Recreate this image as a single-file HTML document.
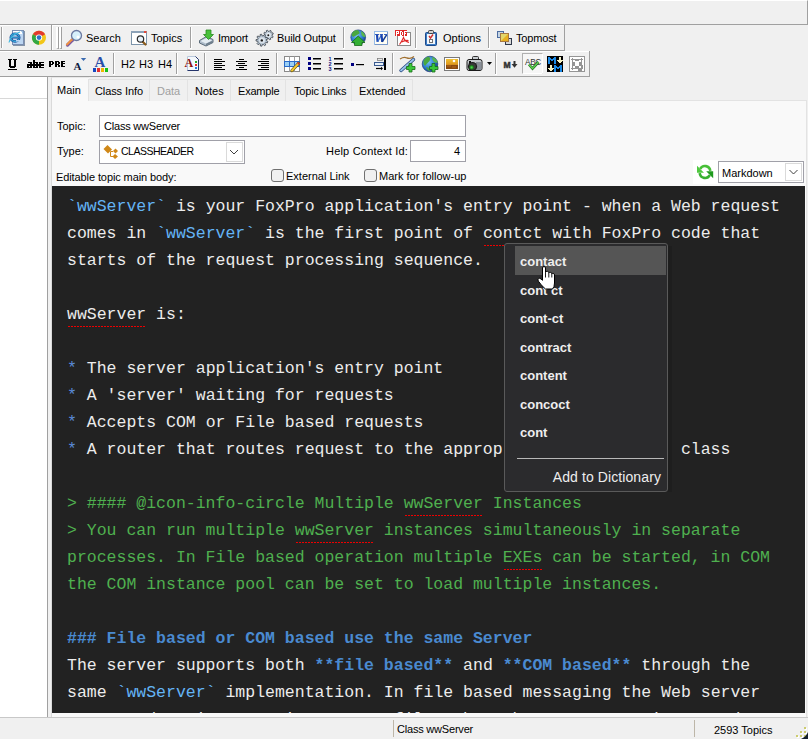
<!DOCTYPE html>
<html><head><meta charset="utf-8">
<style>
*{margin:0;padding:0;box-sizing:border-box}
html,body{width:808px;height:739px;overflow:hidden;background:#f0f0f0;font-family:"Liberation Sans",sans-serif;color:#000}
.a{position:absolute}
.t{position:absolute;white-space:nowrap;font-size:11px;line-height:12px}
.hl{position:absolute;height:1px}
.vl{position:absolute;width:1px}
.ic{position:absolute;width:16px;height:16px;overflow:visible}
#ed{position:absolute;left:52px;top:186px;width:753px;height:527px;background:#222;overflow:hidden}
#ed pre{position:absolute;left:15px;top:7px;font-family:"Liberation Mono",monospace;font-size:16.5px;line-height:27px;color:#ececec;white-space:pre}
.cd{color:#64b4f5}
.bl{color:#5a8ad6}
.gr{color:#4fb04f}
.hd{color:#4a8ad0;font-weight:bold}
.sp{background-image:linear-gradient(90deg,#e00 50%,transparent 50%);background-size:2px 1px;background-repeat:repeat-x;background-position:0 24px}
#menu{position:absolute;left:504px;top:243px;width:164px;height:249px;background:#2b2b2d;border:1px solid #5a5a5a;border-radius:3px}
.sq{height:1px;background-image:linear-gradient(90deg,#e00 66%,transparent 66%);background-size:3px 1px}
.mi{position:absolute;left:15px;font-weight:bold;font-size:13px;color:#eee;line-height:16px;white-space:nowrap}
</style></head><body>

<!-- top band -->
<div class="a" style="left:0;top:0;width:808px;height:25px;border-top:1px solid #fff;border-bottom:1px solid #a0a0a0;border-right:1px solid #a0a0a0;background:#f0f0f0"></div>

<!-- toolbar row 1 -->
<div class="hl" style="left:0;top:25px;width:564px;background:#fff"></div>
<div class="hl" style="left:0;top:50px;width:565px;background:#a0a0a0"></div>
<div class="vl" style="left:1px;top:27px;height:21px;background:#a0a0a0"></div>
<div class="vl" style="left:2px;top:27px;height:21px;background:#fff"></div>
<div class="vl" style="left:51px;top:25px;height:26px;background:#a0a0a0"></div>
<div class="vl" style="left:52px;top:25px;height:25px;background:#fff"></div>
<div class="vl" style="left:564px;top:25px;height:26px;background:#a0a0a0"></div>
<!-- gripper -->
<div class="a" style="left:56px;top:27px;width:3px;height:22px;border-left:2px solid #fff;border-right:1px solid #a0a0a0;border-bottom:1px solid #a0a0a0"></div>
<div class="a" style="left:59px;top:27px;width:3px;height:22px;border-left:2px solid #fff;border-right:1px solid #a0a0a0;border-bottom:1px solid #a0a0a0"></div>

<div class="t" style="left:86px;top:32px">Search</div>
<div class="t" style="left:151px;top:32px">Topics</div>
<div class="vl" style="left:190px;top:27px;height:21px;background:#a0a0a0"></div><div class="vl" style="left:191px;top:27px;height:22px;background:#fff"></div><div class="hl" style="left:190px;top:48px;width:1px;background:#fff"></div>
<div class="t" style="left:218px;top:32px;letter-spacing:-0.2px">Import</div>
<div class="t" style="left:277px;top:32px;letter-spacing:-0.15px">Build Output</div>
<div class="vl" style="left:343px;top:27px;height:21px;background:#a0a0a0"></div><div class="vl" style="left:344px;top:27px;height:22px;background:#fff"></div><div class="hl" style="left:343px;top:48px;width:1px;background:#fff"></div>
<div class="vl" style="left:415px;top:27px;height:21px;background:#a0a0a0"></div><div class="vl" style="left:416px;top:27px;height:22px;background:#fff"></div><div class="hl" style="left:415px;top:48px;width:1px;background:#fff"></div>
<div class="t" style="left:443px;top:32px">Options</div>
<div class="vl" style="left:488px;top:27px;height:21px;background:#a0a0a0"></div><div class="vl" style="left:489px;top:27px;height:22px;background:#fff"></div><div class="hl" style="left:488px;top:48px;width:1px;background:#fff"></div>
<div class="t" style="left:516px;top:32px;letter-spacing:-0.15px">Topmost</div>

<!-- toolbar row 2 -->
<div class="hl" style="left:0;top:51px;width:589px;background:#fff"></div>
<div class="hl" style="left:0;top:76px;width:590px;background:#a0a0a0"></div>
<div class="vl" style="left:589px;top:51px;height:26px;background:#a0a0a0"></div>
<div class="vl" style="left:113px;top:53px;height:21px;background:#a0a0a0"></div><div class="vl" style="left:114px;top:53px;height:22px;background:#fff"></div><div class="hl" style="left:113px;top:74px;width:1px;background:#fff"></div>
<div class="t" style="left:121px;top:58px">H2</div>
<div class="t" style="left:139px;top:58px">H3</div>
<div class="t" style="left:158px;top:58px">H4</div>
<div class="vl" style="left:176px;top:53px;height:21px;background:#a0a0a0"></div><div class="vl" style="left:177px;top:53px;height:22px;background:#fff"></div><div class="hl" style="left:176px;top:74px;width:1px;background:#fff"></div>
<div class="vl" style="left:204px;top:53px;height:21px;background:#a0a0a0"></div><div class="vl" style="left:205px;top:53px;height:22px;background:#fff"></div><div class="hl" style="left:204px;top:74px;width:1px;background:#fff"></div>
<div class="vl" style="left:276px;top:53px;height:21px;background:#a0a0a0"></div><div class="vl" style="left:277px;top:53px;height:22px;background:#fff"></div><div class="hl" style="left:276px;top:74px;width:1px;background:#fff"></div>
<div class="vl" style="left:392px;top:53px;height:21px;background:#a0a0a0"></div><div class="vl" style="left:393px;top:53px;height:22px;background:#fff"></div><div class="hl" style="left:392px;top:74px;width:1px;background:#fff"></div>
<div class="vl" style="left:495px;top:53px;height:21px;background:#a0a0a0"></div><div class="vl" style="left:496px;top:53px;height:22px;background:#fff"></div><div class="hl" style="left:495px;top:74px;width:1px;background:#fff"></div>

<!-- left panel -->
<div class="a" style="left:0;top:77px;width:47px;height:640px;background:#fff"></div>
<div class="vl" style="left:47px;top:77px;height:640px;background:#a0a0a0"></div>
<div class="hl" style="left:0;top:98px;width:47px;background:#d8d8d8"></div>

<!-- main panel -->
<div class="a" style="left:51px;top:100px;width:756px;height:617px;background:#f9f9f9;border-left:1px solid #dadada;border-top:1px solid #e3e3e3;border-right:1px solid #e3e3e3"></div>
<!-- tabs -->
<div class="a" style="left:51px;top:77px;width:38px;height:25px;background:#f9f9f9;border-left:1px solid #dadada;border-top:1px solid #e8e8e8"></div>
<div class="t" style="left:57px;top:84px;font-size:11px">Main</div>
<div class="a" style="left:88px;top:79px;width:62px;height:22px;border:1px solid #e3e3e3;border-bottom:none;background:#f0f0f0"></div>
<div class="t" style="left:95px;top:85px;letter-spacing:-0.1px">Class Info</div>
<div class="a" style="left:149px;top:79px;width:39px;height:22px;border:1px solid #e3e3e3;border-bottom:none;background:#f0f0f0"></div>
<div class="t" style="left:157px;top:85px;color:#a0a0a0">Data</div>
<div class="a" style="left:187px;top:79px;width:44px;height:22px;border:1px solid #e3e3e3;border-bottom:none;background:#f0f0f0"></div>
<div class="t" style="left:195px;top:85px">Notes</div>
<div class="a" style="left:230px;top:79px;width:56px;height:22px;border:1px solid #e3e3e3;border-bottom:none;background:#f0f0f0"></div>
<div class="t" style="left:238px;top:85px;letter-spacing:-0.2px">Example</div>
<div class="a" style="left:285px;top:79px;width:67px;height:22px;border:1px solid #e3e3e3;border-bottom:none;background:#f0f0f0"></div>
<div class="t" style="left:294px;top:85px;letter-spacing:-0.2px">Topic Links</div>
<div class="a" style="left:351px;top:79px;width:62px;height:22px;border:1px solid #e3e3e3;border-bottom:none;background:#f0f0f0"></div>
<div class="t" style="left:359px;top:85px">Extended</div>

<!-- form -->
<div class="t" style="left:57px;top:120px">Topic:</div>
<div class="a" style="left:99px;top:115px;width:367px;height:22px;border:1px solid #a0a0a8;background:#fff"></div>
<div class="t" style="left:104px;top:120px;letter-spacing:-0.2px">Class wwServer</div>
<div class="t" style="left:57px;top:145px">Type:</div>
<div class="a" style="left:99px;top:140px;width:146px;height:24px;border:1px solid #a0a0a8;background:#fff"></div>
<div class="a" style="left:226px;top:142px;width:17px;height:20px;border:1px solid #dadada;background:#fff"></div>
<div class="t" style="left:121px;top:145px;font-size:10.5px;letter-spacing:-0.5px">CLASSHEADER</div>
<div class="t" style="left:326px;top:145px;letter-spacing:0.2px">Help Context Id:</div>
<div class="a" style="left:410px;top:140px;width:56px;height:22px;border:1px solid #a0a0a8;background:#fff"></div>
<div class="t" style="left:454px;top:145px">4</div>
<div class="t" style="left:56px;top:171px;letter-spacing:-0.1px">Editable topic main body:</div>
<div class="a" style="left:271px;top:169px;width:13px;height:13px;border:1px solid #707070;border-radius:3px;background:#f0f0f0"></div>
<div class="t" style="left:286px;top:170px">External Link</div>
<div class="a" style="left:364px;top:169px;width:13px;height:13px;border:1px solid #707070;border-radius:3px;background:#f0f0f0"></div>
<div class="t" style="left:379px;top:170px">Mark for follow-up</div>
<div class="a" style="left:693px;top:160px;width:25px;height:24px;background:#fff"></div>
<div class="a" style="left:718px;top:161px;width:86px;height:22px;border:1px solid #a0a0a8;background:#fff"></div>
<div class="a" style="left:785px;top:163px;width:17px;height:18px;border:1px solid #dadada;background:#fff"></div>
<div class="t" style="left:722px;top:167px">Markdown</div>

<!-- icons -->
<svg class="a" style="left:0;top:0" width="808" height="739" viewBox="0 0 808 739">
<!-- IE doc -->
<rect x="13" y="31" width="12" height="15" fill="#8494a8"/>
<rect x="12.5" y="30.5" width="11" height="14" fill="#bcd6f2" stroke="#7a8eb2"/>
<rect x="13" y="31" width="9" height="3" fill="#fff"/>
<path d="M21 30.5 L23.5 33" stroke="#6aa0d0" fill="none"/>
<ellipse cx="15" cy="37.6" rx="4.2" ry="3.9" fill="none" stroke="#1a4a98" stroke-width="2.6"/>
<ellipse cx="15" cy="37.6" rx="4.2" ry="3.9" fill="none" stroke="#38a8d8" stroke-width="1.3"/>
<path d="M10.8 37.6 H19.4" stroke="#1a4a98" stroke-width="1.8"/>
<path d="M11.2 37.4 H19" stroke="#38a8d8" stroke-width="0.8"/>
<path d="M16 40.8 H20.5" stroke="#bcd6f2" stroke-width="1.6"/>
<path d="M9 42.5 Q10.5 35 20 32" stroke="#40b8e0" stroke-width="1.1" fill="none"/>
<!-- Chrome -->
<circle cx="39" cy="37.8" r="7" fill="#f2c618"/>
<path d="M39 37.8 L32.9 34.3 A7 7 0 0 1 45.1 34.3 Z" fill="#e23a2e"/>
<path d="M39 37.8 L32.9 34.3 A7 7 0 0 0 39 44.8 Z" fill="#32a844"/>
<circle cx="39" cy="37.6" r="3.2" fill="#fff"/>
<circle cx="39" cy="37.6" r="2.3" fill="#2f72c8"/>
<!-- magnifier -->
<path d="M67.5 45 L72.5 40" stroke="#7a5aa0" stroke-width="3.2" stroke-linecap="round"/>
<path d="M67 44.5 L72 39.5" stroke="#f09040" stroke-width="2" stroke-linecap="round"/>
<circle cx="76.5" cy="35.5" r="5" fill="#d6effb" stroke="#6a78a0" stroke-width="1.3"/>
<circle cx="78" cy="37" r="1.5" fill="#fff"/>
<!-- topics window -->
<rect x="131.5" y="31.5" width="15" height="13" fill="#fff" stroke="#7c94aa"/>
<rect x="131" y="31" width="16" height="2" fill="#8ca2b8"/>
<rect x="144" y="31" width="2.5" height="2" fill="#e04a3a"/>
<path d="M142.5 41.5 L145.5 44.5" stroke="#8a5a1a" stroke-width="2.2" stroke-linecap="round"/>
<circle cx="140.5" cy="39" r="3.2" fill="#e8f2fa" stroke="#2a2a2a" stroke-width="1.2"/>
<!-- import -->
<path d="M199.5 40.5 L206.5 36.5 L213 39.5 L213 42.5 L206 46 L199.5 43 Z" fill="#aebccb" stroke="#5a6a78"/>
<path d="M200.5 41 L206.5 38 L212 40.5 L206 43.5 Z" fill="#e4ecf2"/>
<path d="M206 43.8 L212.5 40.8 L212.5 42.5 L206 45.5 Z" fill="#6c7c8a"/>
<path d="M206 30 H211 V34.5 H213.5 L208.5 39.5 L203.5 34.5 H206 Z" fill="#48c03a" stroke="#2a8a20" stroke-width="0.8"/>
<!-- gears -->
<path d="M272.03 35.72 L273.15 36.53 L272.56 37.74 L271.23 37.35 L270.49 38.00 L270.71 39.37 L269.44 39.81 L268.77 38.59 L267.78 38.53 L266.97 39.65 L265.76 39.06 L266.15 37.73 L265.50 36.99 L264.13 37.21 L263.69 35.94 L264.91 35.27 L264.97 34.28 L263.85 33.47 L264.44 32.26 L265.77 32.65 L266.51 32.00 L266.29 30.63 L267.56 30.19 L268.23 31.41 L269.22 31.47 L270.03 30.35 L271.24 30.94 L270.85 32.27 L271.50 33.01 L272.87 32.79 L273.31 34.06 L272.09 34.73 Z" fill="#c4d0dc" stroke="#3c444c" stroke-width="0.8"/>
<circle cx="268.5" cy="35" r="2.2" fill="#e8eef4"/>
<circle cx="268.3" cy="35.2" r="1" fill="#1a1a1a"/>
<path d="M266.38 40.64 L267.87 41.42 L267.41 42.80 L265.74 42.51 L265.07 43.35 L265.72 44.91 L264.47 45.67 L263.38 44.38 L262.33 44.59 L261.82 46.20 L260.37 45.98 L260.37 44.29 L259.43 43.77 L258.01 44.68 L257.04 43.58 L258.12 42.28 L257.74 41.28 L256.06 41.06 L256.03 39.60 L257.69 39.31 L258.04 38.29 L256.90 37.04 L257.81 35.90 L259.27 36.75 L260.19 36.19 L260.12 34.50 L261.55 34.22 L262.13 35.80 L263.19 35.96 L264.22 34.63 L265.50 35.33 L264.93 36.92 L265.64 37.72 L267.28 37.36 L267.81 38.72 L266.35 39.57 Z" fill="#b4c2d0" stroke="#3c444c" stroke-width="0.8"/>
<circle cx="262" cy="40.2" r="3" fill="#dce4ec"/>
<circle cx="261.8" cy="40.4" r="1.2" fill="#1a1a1a"/>
<!-- globe up -->
<circle cx="358.2" cy="37.3" r="7.4" fill="url(#gl)" stroke="#1e3e80" stroke-width="0.7"/>
<path d="M351.5 35 Q352.5 30.5 357 30 Q360 31 359.5 33.5 Q356 35.5 353 37 Z" fill="#4aa840"/>
<path d="M361 31 Q365 33 365.5 37 Q363 37.5 361.5 35 Z" fill="#5ab848"/>
<path d="M358.2 36 L351.5 42.5 H354.5 V45.5 H362 V42.5 H365 Z" fill="#34b034" stroke="#1a6a1a" stroke-width="0.8"/>
<!-- W -->
<rect x="374.5" y="31.5" width="13" height="13" fill="#fffef4" stroke="#98bce8"/>
<path d="M375 44.5 H387.5 V32" stroke="#7898c8" fill="none"/>
<path d="M375 34.5 H379 M379.8 34.5 H383 M384 34.5 H387" stroke="#3a64c0" stroke-width="1"/>
<path d="M377 34.5 L377.6 41.8" stroke="#1a44b0" stroke-width="2.2"/>
<path d="M377.6 41.8 L381.6 34.8" stroke="#3a70d0" stroke-width="1.3"/>
<path d="M381.5 34.5 L382.2 41.8" stroke="#1a44b0" stroke-width="2.2"/>
<path d="M382.2 41.8 L386.6 34.8" stroke="#123a90" stroke-width="1.5"/>
<!-- PDF -->
<rect x="397.5" y="32.5" width="13" height="13" fill="#fff" stroke="#8a8a8a"/>
<rect x="395" y="30" width="12" height="6" fill="#e02828"/>
<g fill="#fff" shape-rendering="crispEdges"><rect x="396" y="31" width="1" height="1"/><rect x="397" y="31" width="1" height="1"/><rect x="398" y="31" width="1" height="1"/><rect x="396" y="32" width="1" height="1"/><rect x="398" y="32" width="1" height="1"/><rect x="396" y="33" width="1" height="1"/><rect x="397" y="33" width="1" height="1"/><rect x="398" y="33" width="1" height="1"/><rect x="396" y="34" width="1" height="1"/><rect x="396" y="35" width="1" height="1"/><rect x="400" y="31" width="1" height="1"/><rect x="401" y="31" width="1" height="1"/><rect x="400" y="32" width="1" height="1"/><rect x="402" y="32" width="1" height="1"/><rect x="400" y="33" width="1" height="1"/><rect x="402" y="33" width="1" height="1"/><rect x="400" y="34" width="1" height="1"/><rect x="402" y="34" width="1" height="1"/><rect x="400" y="35" width="1" height="1"/><rect x="401" y="35" width="1" height="1"/><rect x="404" y="31" width="1" height="1"/><rect x="405" y="31" width="1" height="1"/><rect x="406" y="31" width="1" height="1"/><rect x="404" y="32" width="1" height="1"/><rect x="404" y="33" width="1" height="1"/><rect x="405" y="33" width="1" height="1"/><rect x="404" y="34" width="1" height="1"/><rect x="404" y="35" width="1" height="1"/></g>
<path d="M399.5 44.5 Q402 41 403.5 37.5 Q404.5 41 409 42.5 M401.5 42 Q405 40 408.5 40.5" stroke="#e02828" stroke-width="1.1" fill="none"/>
<!-- clipboard -->
<rect x="425.5" y="32.5" width="11" height="13" rx="1" fill="#3c7cc4" stroke="#1c4a8c"/>
<rect x="427" y="34" width="8" height="10" fill="#f2f6fb"/>
<rect x="428.5" y="30.5" width="5" height="3" rx="1" fill="#d0d0d0" stroke="#404040"/>
<path d="M429 36 L430.5 38 L433 34.5" stroke="#d03030" stroke-width="1.4" fill="none"/>
<rect x="429.5" y="39.5" width="3" height="3" fill="#fff" stroke="#707070"/>
<!-- topmost -->
<rect x="497.5" y="31.5" width="6" height="6" fill="#c4d4e4" stroke="#4c6ca0"/>
<rect x="505.5" y="38.5" width="6" height="6" fill="#d8d8d8" stroke="#303848"/>
<rect x="500.5" y="33.5" width="8" height="8" fill="#e4d66a" stroke="#a87840"/>
<path d="M501 41 L508 34 V41 Z" fill="#e8b020"/>

<!-- ROW 2 -->
<g fill="#000" shape-rendering="crispEdges">
<rect x="8" y="59" width="4" height="1"/><rect x="13" y="59" width="4" height="1"/><rect x="9" y="60" width="2" height="6"/><rect x="14" y="60" width="2" height="6"/><rect x="9" y="66" width="7" height="1"/><rect x="10" y="67" width="5" height="1"/><rect x="8" y="69" width="9" height="1"/>
<rect x="28" y="62" width="4" height="1"/><rect x="30" y="63" width="2" height="1"/><rect x="27" y="64" width="17" height="2"/><rect x="27" y="66" width="2" height="1"/><rect x="30" y="66" width="2" height="1"/><rect x="27" y="67" width="5" height="1"/>
<rect x="33" y="60" width="2" height="2"/><rect x="33" y="62" width="5" height="1"/><rect x="33" y="63" width="2" height="1"/><rect x="36" y="63" width="2" height="1"/><rect x="33" y="66" width="2" height="1"/><rect x="36" y="66" width="2" height="1"/><rect x="33" y="67" width="5" height="1"/>
<rect x="39" y="62" width="5" height="1"/><rect x="39" y="63" width="2" height="1"/><rect x="39" y="66" width="2" height="1"/><rect x="39" y="67" width="5" height="1"/>
<rect x="49" y="61" width="4" height="1"/><rect x="49" y="62" width="2" height="5"/><rect x="52" y="62" width="2" height="2"/><rect x="49" y="64" width="4" height="1"/>
<rect x="55" y="61" width="4" height="1"/><rect x="55" y="62" width="2" height="5"/><rect x="58" y="62" width="2" height="2"/><rect x="55" y="64" width="4" height="1"/><rect x="58" y="65" width="2" height="2"/>
<rect x="61" y="61" width="4" height="1"/><rect x="61" y="62" width="2" height="5"/><rect x="61" y="63" width="4" height="1"/><rect x="61" y="66" width="4" height="1"/>
</g>
<text x="73.5" y="70" font-family="Liberation Serif" font-weight="bold" font-size="11" fill="#0e1a40">A</text>
<path d="M80.8 58 H86.2 L83.5 61 Z" fill="#3a6ab0"/>
<text x="94.5" y="67.2" font-family="Liberation Serif" font-weight="bold" font-size="15" fill="#2a4ea8">A</text>
<rect x="93" y="68" width="3" height="4" fill="#1848c0"/>
<rect x="97" y="68" width="3" height="4" fill="#e03030"/>
<rect x="101" y="68" width="3" height="4" fill="#f0b800"/>
<rect x="105" y="68" width="3" height="4" fill="#18c018"/>
<!-- A doc -->
<path d="M187.5 56.5 H195.5 L198.5 59.5 V70.5 H187.5 Z" fill="#f4f8fc" stroke="#b8c8dc"/>
<path d="M195.5 56.5 L198.5 59.5 V70.5 H187.5" fill="none" stroke="#24346a"/>
<rect x="195" y="61" width="2" height="2" fill="#28a028"/>
<rect x="195" y="64" width="2" height="2" fill="#e02828"/>
<rect x="195" y="67" width="2" height="2" fill="#2878e0"/>
<text x="184.5" y="67" font-family="Liberation Serif" font-weight="bold" font-size="12" fill="#8a1010">A</text>
<!-- align left/center/right -->
<g fill="#000">
<rect x="214" y="59" width="8" height="1"/><rect x="214" y="61" width="11" height="1"/><rect x="214" y="63" width="8" height="1"/><rect x="214" y="65" width="11" height="1"/><rect x="214" y="67" width="8" height="1"/><rect x="214" y="69" width="11" height="1"/>
<rect x="239" y="59" width="5" height="1"/><rect x="236" y="61" width="11" height="1"/><rect x="238" y="63" width="7" height="1"/><rect x="236" y="65" width="11" height="1"/><rect x="239" y="67" width="5" height="1"/><rect x="236" y="69" width="11" height="1"/>
<rect x="261" y="59" width="8" height="1"/><rect x="258" y="61" width="11" height="1"/><rect x="261" y="63" width="8" height="1"/><rect x="258" y="65" width="11" height="1"/><rect x="261" y="67" width="8" height="1"/><rect x="258" y="69" width="11" height="1"/>
</g>
<!-- table -->
<rect x="284.5" y="56.5" width="15" height="15" fill="#fff" stroke="#8a8a8a"/>
<path d="M289.5 56.5 V71.5 M294.5 56.5 V71.5 M284.5 61.5 H299.5 M284.5 66.5 H299.5" stroke="#a0a0a0"/>
<rect x="284.5" y="61.5" width="15" height="5" fill="#9cd0f4" stroke="#2a6ac8"/>
<path d="M289.5 61.5 V66.5 M294.5 61.5 V66.5" stroke="#2a6ac8"/>
<path d="M292 70.5 L298.5 63.5" stroke="#5a4a10" stroke-width="3.2" stroke-linecap="round"/>
<path d="M292 70.5 L298.5 63.5" stroke="#f0c830" stroke-width="2" stroke-linecap="round"/>
<path d="M297.5 62.5 L299.5 64.5" stroke="#d03030" stroke-width="1.5"/>
<!-- bullets -->
<g fill="#000080"><rect x="308" y="57" width="3" height="3"/><rect x="308" y="62" width="3" height="3"/><rect x="308" y="67" width="3" height="3"/></g>
<g fill="#000"><rect x="313" y="58" width="8" height="1.5"/><rect x="313" y="63" width="8" height="1.5"/><rect x="313" y="68" width="8" height="1.5"/></g>
<g fill="#101080" font-family="Liberation Sans" font-weight="bold" font-size="5.5"><text x="328.5" y="61">1</text><text x="328.5" y="66">2</text><text x="328.5" y="71.2">3</text></g>
<g fill="#000"><rect x="334" y="58" width="9" height="1.5"/><rect x="334" y="63" width="9" height="1.5"/><rect x="334" y="68" width="9" height="1.5"/></g>
<!-- hr -->
<rect x="351" y="63" width="3" height="3" fill="#000080"/>
<rect x="356" y="64" width="8" height="1.2" fill="#000"/>
<!-- indent -->
<rect x="384" y="58" width="2" height="12" fill="#000"/>
<rect x="377.5" y="58.5" width="5" height="2" fill="#e8e8e8" stroke="#808080" stroke-width="0.8"/>
<rect x="374.5" y="62.5" width="9" height="3" fill="#e8f0f8" stroke="#3a5a90"/>
<path d="M376 68.5 H382" stroke="#000" stroke-width="1.2"/>
<path d="M381 66.8 L383 68.5 L381 70.2 Z" fill="#000"/>
<!-- link+ -->
<path d="M401 70.5 L413.5 59.5" stroke="#2a4a80" stroke-width="3.4" stroke-linecap="round"/>
<path d="M401 70.5 L413.5 59.5" stroke="#9ac4ec" stroke-width="1.8" stroke-linecap="round"/>
<path d="M400 59 Q404 56.5 407 58 Q411 59 414 56.5" stroke="#a07030" stroke-width="1.3" fill="none"/>
<path d="M409 63.5 H412 V66.5 H415 V69.5 H412 V72 H409 V69.5 H406.5 V66.5 H409 Z" fill="#3ac83a" stroke="#1a6a1a" stroke-width="0.8"/>
<!-- globe+ -->
<defs><radialGradient id="gl" cx="0.4" cy="0.35" r="0.7"><stop offset="0" stop-color="#7cc4f4"/><stop offset="0.6" stop-color="#2a7ad0"/><stop offset="1" stop-color="#1a3a80"/></radialGradient></defs>
<circle cx="430" cy="64" r="7.8" fill="url(#gl)" stroke="#1c3c7c" stroke-width="0.7"/>
<path d="M423.5 61 Q425 57 429 56.8 Q431 58.5 429.5 61 Q427 63.5 425 66 Q423 64 423.5 61 Z" fill="#4aa840"/>
<path d="M432 57 Q436.5 58 437.8 62.5 Q435 63.5 433.5 61.5 Q432 59.5 432 57 Z" fill="#5ab848"/>
<path d="M426 67 Q429 67 430 71 Q427 71 426 67 Z" fill="#4aa840"/>
<path d="M432 63.5 H435 V66.5 H438 V69.5 H435 V72 H432 V69.5 H429.5 V66.5 H432 Z" fill="#3ac83a" stroke="#1a6a1a" stroke-width="0.8"/>
<!-- image -->
<rect x="444.5" y="57.5" width="15" height="13" fill="#fff" stroke="#7a7a7a"/>
<defs><linearGradient id="sun" x1="0" y1="0" x2="0" y2="1"><stop offset="0" stop-color="#f0c030"/><stop offset="0.5" stop-color="#e09a20"/><stop offset="1" stop-color="#8a4a08"/></linearGradient>
<radialGradient id="cam" cx="0.5" cy="0.5" r="0.5"><stop offset="0" stop-color="#50e050"/><stop offset="1" stop-color="#106010"/></radialGradient></defs>
<rect x="446" y="59" width="12" height="10" fill="url(#sun)"/>
<circle cx="454" cy="61" r="1.3" fill="#fff"/>
<rect x="446" y="65" width="12" height="4" fill="#8a4a10"/><path d="M447 66 H451 M452 67 H456" stroke="#c07020" stroke-width="0.8"/>
<!-- camera -->
<rect x="472.5" y="56.5" width="6" height="4" rx="1" fill="#c8ccd0" stroke="#202020" stroke-width="0.9"/>
<path d="M467 61.5 Q467 59.5 469 59.5 H480 Q482 59.5 482 61.5 V68.5 Q482 70.5 480 70.5 H469 Q467 70.5 467 68.5 Z" fill="#c4c8cc" stroke="#1a1a1a" stroke-width="1"/>
<path d="M476 62 H481.5 V70 H476 Z" fill="#8a9098"/>
<rect x="469" y="61" width="2" height="3" fill="#101010"/>
<circle cx="472.5" cy="66.5" r="4.6" fill="#1a1a1a"/>
<circle cx="472.5" cy="66.5" r="3.4" fill="#3a3a3a"/>
<circle cx="471.6" cy="67.4" r="2.4" fill="url(#cam)"/>
<path d="M487 62 H492 L489.5 65 Z" fill="#000"/>
<!-- M down -->
<text x="503.6" y="67.8" font-family="Liberation Sans" font-weight="bold" font-size="8.6" fill="#333" stroke="#333" stroke-width="0.5">M</text>
<rect x="513.5" y="61" width="2" height="4" fill="#333"/>
<path d="M511.5 64 H517.5 L514.5 67.8 Z" fill="#333"/>
<!-- pressed ABC -->
<rect x="522.5" y="53.5" width="20" height="20" fill="#f6f6f6" stroke="#b0b0b0"/>
<path d="M542.5 53.5 V73.5 H522.5" stroke="#fff" fill="none"/>
<text x="525" y="65" font-family="Liberation Sans" font-size="8.2" fill="#303030" letter-spacing="-0.3">ABC</text>
<path d="M529 64.5 L532.5 68.5 L538.5 62" stroke="#1e6a1e" stroke-width="2.6" fill="none"/>
<path d="M529 64.5 L532.5 68.5 L538.5 62" stroke="#60d050" stroke-width="1.3" fill="none"/>
<!-- MM -->
<rect x="547" y="56" width="16" height="16" fill="#000"/>
<g fill="#1a8ae8" shape-rendering="crispEdges">
<rect x="548" y="57" width="2" height="7"/><rect x="554" y="57" width="2" height="7"/><rect x="550" y="58" width="1" height="2"/><rect x="553" y="58" width="1" height="2"/><rect x="551" y="59" width="2" height="2"/>
<rect x="554" y="65" width="2" height="7"/><rect x="560" y="65" width="2" height="7"/><rect x="556" y="66" width="1" height="2"/><rect x="559" y="66" width="1" height="2"/><rect x="557" y="67" width="2" height="2"/>
</g>
<g fill="#f4f0c4" shape-rendering="crispEdges">
<rect x="559" y="57" width="2" height="3"/><rect x="557" y="60" width="6" height="1"/><rect x="558" y="61" width="4" height="1"/><rect x="559" y="62" width="2" height="1"/>
<rect x="550" y="65" width="2" height="3"/><rect x="548" y="68" width="6" height="1"/><rect x="549" y="69" width="4" height="1"/><rect x="550" y="70" width="2" height="1"/>
</g>
<!-- box -->
<rect x="569.5" y="56.5" width="15" height="15" fill="#fff" stroke="#959595"/>
<path d="M571 59.5 H583 M571 68.5 H583 M572.5 58 V70 M581.5 58 V70" stroke="#959595" stroke-width="1"/>
<g fill="#959595" shape-rendering="crispEdges"><rect x="575" y="59" width="4" height="2"/><rect x="573" y="62" width="2" height="4"/><rect x="579" y="62" width="2" height="4"/><rect x="575" y="66" width="4" height="2"/><rect x="581" y="65" width="2" height="6"/><rect x="578" y="69" width="6" height="2"/></g>
<rect x="582" y="69" width="2" height="2" fill="#fff"/>
<!-- type icon -->
<g fill="#d08818">
<path d="M103.5 149 L107.5 145 L112 149.5 L108 153.5 Z"/>
<path d="M113 151 L115.5 148.5 L118 151 L115.5 153.5 Z"/>
<path d="M112.5 156.5 L115 154 L118 156.5 L115 159 Z"/>
</g>
<path d="M110.5 151.5 V156.5 H113 M110.5 151.5 H113" stroke="#d08818" stroke-width="1" fill="none"/>
<!-- combo chevrons -->
<path d="M230 150 L234 154 L238 150" stroke="#404040" stroke-width="1" fill="none"/>
<path d="M789.5 170 L793.5 174 L797.5 170" stroke="#404040" stroke-width="1" fill="none"/>
<!-- refresh -->
<path d="M710.3 170.8 A5.4 5.4 0 0 0 700.2 168.8" stroke="#48c038" stroke-width="2.6" fill="none"/>
<path d="M697 165.8 V172.8 H704 Z" fill="#50c840"/>
<path d="M699.7 173.2 A5.4 5.4 0 0 0 709.8 175.2" stroke="#38b030" stroke-width="2.6" fill="none"/>
<path d="M713.2 178.2 V171.2 H706.2 Z" fill="#1e9a1e"/>
</svg>

<!-- editor -->
<div id="ed"><pre><span class="cd">`wwServer`</span> is your FoxPro application's entry point - when a Web request
comes in <span class="cd">`wwServer`</span> is the first point of contct with FoxPro code that
starts of the request processing sequence.

wwServer is:

<span class="bl">*</span> The server application's entry point
<span class="bl">*</span> A 'server' waiting for requests
<span class="bl">*</span> Accepts COM or File based requests
<span class="bl">*</span> A router that routes request to the appropriate wwProcess   class

<span class="gr">&gt; #### @icon-info-circle Multiple wwServer Instances</span>
<span class="gr">&gt; You can run multiple wwServer instances simultaneously in separate</span>
<span class="gr">processes. In File based operation multiple EXEs can be started, in COM</span>
<span class="gr">the COM instance pool can be set to load multiple instances.</span>

<span class="hd">### File based or COM based use the same Server</span>
The server supports both <span class="hd">**file based**</span> and <span class="hd">**COM based**</span> through the
same <span class="cd">`wwServer`</span> implementation. In file based messaging the Web server
request data is sent via message files that the server retrieves and</pre></div>


<!-- spell underlines -->
<div class="a sq" style="left:68px;top:326px;width:78px"></div>
<div class="a sq" style="left:484px;top:245px;width:20px"></div>
<div class="a sq" style="left:405px;top:515px;width:78px"></div>
<div class="a sq" style="left:296px;top:542px;width:78px"></div>
<div class="a sq" style="left:504px;top:569px;width:38px"></div>

<!-- spelling menu -->
<div class="a" style="left:668px;top:246px;width:4px;height:246px;background:rgba(0,0,0,0.1)"></div>
<div id="menu">
<div class="a" style="left:10px;top:2px;width:151px;height:29px;background:#555"></div>
<div class="mi" style="top:10px">contact</div>
<div class="mi" style="top:39px">cont ct</div>
<div class="mi" style="top:67px">cont-ct</div>
<div class="mi" style="top:96px">contract</div>
<div class="mi" style="top:124px">content</div>
<div class="mi" style="top:153px">concoct</div>
<div class="mi" style="top:181px">cont</div>
<div class="a" style="left:12px;top:214px;width:147px;height:1px;background:#b8b8b8"></div>
<div class="mi" style="top:225px;left:auto;right:6px;font-weight:normal;font-size:14px;letter-spacing:0.1px">Add to Dictionary</div>
</div>
<svg class="a" style="left:0;top:0" width="808" height="739" viewBox="0 0 808 739">
<path d="M542.5 268 Q542.5 266.5 544 266.5 Q545.5 266.5 545.5 268 V272.5 Q546 271.3 547.3 271.3 Q548.8 271.4 548.8 272.8 Q549.3 272.3 550.5 272.4 Q551.8 272.6 551.8 273.8 Q552.3 273.3 553.3 273.4 Q554.5 273.7 554.5 275 V283 Q554.5 287 552.5 289 H545.5 Q544 288 541 284.5 L538.4 281.2 Q537.4 279.6 538.5 278.6 Q539.6 277.7 541 279 L542.5 280.3 Z" fill="#fff" stroke="#000" stroke-width="1"/>
<path d="M545.5 272.5 V277.5 M548.8 273 V277.5 M551.8 274 V277.5" stroke="#000" stroke-width="0.9"/>
</svg>

<!-- status bar -->
<div class="hl" style="left:0;top:717px;width:808px;background:#c8c8c8"></div>
<div class="vl" style="left:393px;top:720px;height:17px;background:#bdb6a8"></div>
<div class="t" style="left:397px;top:723px;letter-spacing:-0.2px">Class wwServer</div>
<div class="vl" style="left:694px;top:720px;height:17px;background:#bdb6a8"></div>
<div class="t" style="left:714px;top:724px">2593 Topics</div>

<svg class="a" style="left:790px;top:722px" width="18" height="17" viewBox="790 722 18 17" shape-rendering="crispEdges">
<g fill="#fff"><rect x="805" y="728" width="2" height="2"/><rect x="801" y="732" width="2" height="2"/><rect x="805" y="732" width="2" height="2"/><rect x="797" y="736" width="2" height="2"/><rect x="801" y="736" width="2" height="2"/><rect x="805" y="736" width="2" height="2"/></g>
<g fill="#cccc70"><rect x="804" y="727" width="2" height="2"/><rect x="800" y="731" width="2" height="2"/><rect x="804" y="731" width="2" height="2"/><rect x="796" y="735" width="2" height="2"/><rect x="800" y="735" width="2" height="2"/><rect x="804" y="735" width="2" height="2"/></g>
<path d="M808 732 V739 H801 Q806 737 808 732 Z" fill="#14202c" shape-rendering="auto"/>
</svg>
</body></html>
